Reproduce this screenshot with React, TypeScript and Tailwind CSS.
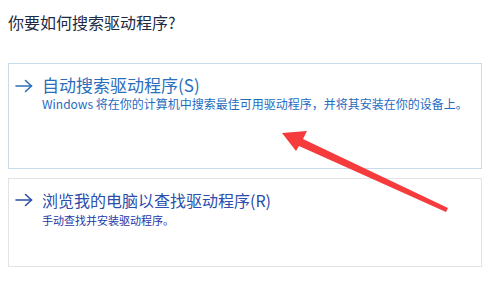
import React from "react";

function Arrow({ color }: { color: string }) {
  return (
    <svg width="18" height="14" viewBox="0 0 18 14" fill="none" stroke={color} strokeWidth="1.6" strokeLinecap="round" strokeLinejoin="round">
      <path d="M1 7H16.5" />
      <path d="M10.5 1.5L16.5 7L10.5 12.5" />
    </svg>
  );
}

export default function App() {
  return (
    <div
      className="relative w-[493px] h-[289px] bg-white overflow-hidden"
      style={{ fontFamily: '"Noto Sans CJK SC", "Noto Sans", sans-serif' }}
    >
      <div className="pl-2 pt-[10px] text-[16px] leading-[24px] text-[#1c2a44]">你要如何搜索驱动程序?</div>

      <div className="ml-2 mt-[29px] w-[474px] h-[106px] border border-[#c8dbe9] pl-[6px] pt-[10px]">
        <div className="flex items-start">
          <div className="h-[22px] w-[18px] flex items-center mt-[1px]">
            <Arrow color="#2a6ebd" />
          </div>
          <div className="ml-[9px] flex flex-col">
            <div className="text-[17px] leading-[22px] text-[#2a6ebd]">自动搜索驱动程序(S)</div>
            <div className="text-[12px] leading-[16px] text-[#1f6cbf]">
              Windows 将在你的计算机中搜索最佳可用驱动程序，并将其安装在你的设备上。
            </div>
          </div>
        </div>
      </div>

      <div className="ml-2 mt-[9px] w-[474px] h-[89px] border border-[#e3e3e3] pl-[6px] pt-[10px]">
        <div className="flex items-start">
          <div className="h-[22px] w-[18px] flex items-center">
            <Arrow color="#2b4dab" />
          </div>
          <div className="ml-[9px] flex flex-col">
            <div className="text-[16px] leading-[22px] text-[#2b4dab]">浏览我的电脑以查找驱动程序(R)</div>
            <div className="mt-[2px] text-[11px] leading-[15px] text-[#2238a8]">手动查找并安装驱动程序。</div>
          </div>
        </div>
      </div>

      <svg className="absolute left-0 top-0 pointer-events-none" width="493" height="289" viewBox="0 0 493 289">
        <polygon
          points="282,133 307,131 303,139 448,208 446,212 299,146 296,151"
          fill="#f53b3b"
        />
      </svg>
    </div>
  );
}
